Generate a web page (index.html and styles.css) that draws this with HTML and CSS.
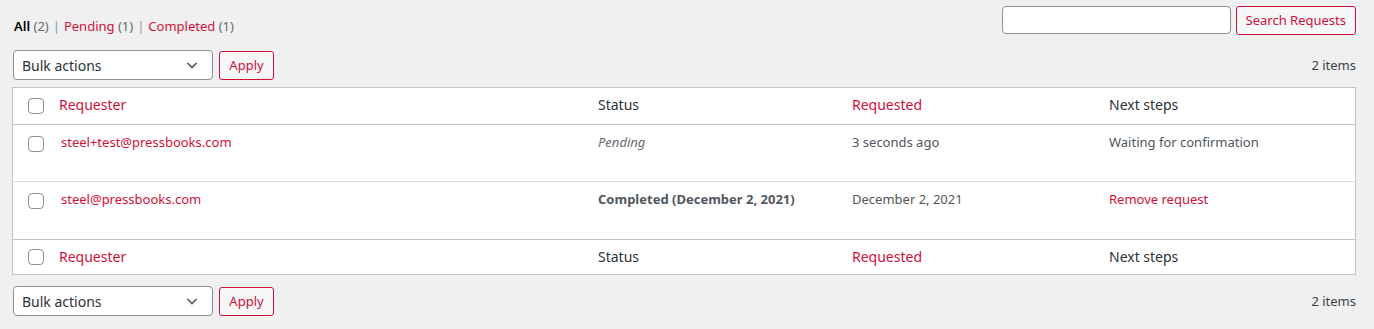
FILE: index.html
```html
<!DOCTYPE html>
<html lang="en">
  <head>
    <meta charset="UTF-8" />
    <title>Export Personal Data</title>
    <link rel="stylesheet" href="styles.css">
  </head>
  <body>
    <div class="wrap">
      <div class="top-row">
        <ul class="subsubsub">
          <li><span class="current">All</span> <span class="count">(2)</span></li>
          <li class="sep">|</li>
          <li><a href="#">Pending</a> <span class="count">(1)</span></li>
          <li class="sep">|</li>
          <li><a href="#">Completed</a> <span class="count">(1)</span></li>
        </ul>
        <div class="search-box">
          <input type="search" class="search-input" />
          <button class="button">Search Requests</button>
        </div>
      </div>

      <div class="tablenav">
        <div class="actions">
          <div class="select">
            <span>Bulk actions</span>
            <svg width="16" height="16" viewBox="0 0 16 16"><path d="M3.5 6 L8 10.5 L12.5 6" fill="none" stroke="#50575e" stroke-width="1.6"/></svg>
          </div>
          <button class="button apply">Apply</button>
        </div>
        <div class="num-items">2 items</div>
      </div>

      <table class="list-table">
        <thead>
          <tr>
            <th class="check-column"><span class="checkbox"></span></th>
            <th class="col-requester"><a href="#">Requester</a></th>
            <th class="col-status">Status</th>
            <th class="col-requested"><a href="#">Requested</a></th>
            <th class="col-next">Next steps</th>
          </tr>
        </thead>
        <tbody>
          <tr>
            <td class="check-column"><span class="checkbox"></span></td>
            <td class="email"><a href="#">steel+test@pressbooks.com</a></td>
            <td><em class="pending">Pending</em></td>
            <td>3 seconds ago</td>
            <td>Waiting for confirmation</td>
          </tr>
          <tr>
            <td class="check-column"><span class="checkbox"></span></td>
            <td class="email"><a href="#">steel@pressbooks.com</a></td>
            <td><strong>Completed (December 2, 2021)</strong></td>
            <td>December 2, 2021</td>
            <td><a href="#">Remove request</a></td>
          </tr>
        </tbody>
        <tfoot>
          <tr>
            <th class="check-column"><span class="checkbox"></span></th>
            <th><a href="#">Requester</a></th>
            <th>Status</th>
            <th><a href="#">Requested</a></th>
            <th>Next steps</th>
          </tr>
        </tfoot>
      </table>

      <div class="tablenav bottom">
        <div class="actions">
          <div class="select">
            <span>Bulk actions</span>
            <svg width="16" height="16" viewBox="0 0 16 16"><path d="M3.5 6 L8 10.5 L12.5 6" fill="none" stroke="#50575e" stroke-width="1.6"/></svg>
          </div>
          <button class="button apply">Apply</button>
        </div>
        <div class="num-items">2 items</div>
      </div>
    </div>
  </body>
</html>
```

FILE: styles.css
```css
body {
  margin: 0;
  background-color: #f0f0f1;
  font-family: "Noto Sans", sans-serif;
  font-size: 13px;
  color: #3c434a;
}

a {
  color: #d0103a;
  text-decoration: none;
}

.wrap {
  padding: 6px 18px 0 12px;
}

.top-row {
  display: flex;
  justify-content: space-between;
  align-items: center;
  height: 28px;
}

.subsubsub {
  list-style: none;
  margin: 11px 0 0 2px;
  padding: 0;
  display: flex;
  gap: 4px;
  font-size: 13px;
  color: #646970;
}

.subsubsub .current {
  color: #000;
  font-weight: 600;
}

.subsubsub .sep {
  color: #8c9ab0;
}

.search-box {
  display: flex;
  gap: 5px;
}

.search-input {
  width: 229px;
  height: 28px;
  box-sizing: border-box;
  border: 1px solid #8c8f94;
  border-radius: 4px;
  background: #fff;
}

.button {
  height: 29px;
  box-sizing: border-box;
  padding: 0 9px;
  border: 1px solid #d0103a;
  border-radius: 3px;
  background-color: #f6f7f7;
  color: #d0103a;
  font-family: inherit;
  font-size: 13px;
}

.button.apply {
  width: 55px;
  padding: 0;
}

.tablenav {
  display: flex;
  justify-content: space-between;
  align-items: center;
  height: 30px;
  margin: 16px 0 7px 1px;
}

.tablenav.bottom {
  margin-top: 11px;
}

.actions {
  display: flex;
  gap: 6px;
  align-items: center;
}

.select {
  width: 200px;
  height: 30px;
  box-sizing: border-box;
  display: flex;
  justify-content: space-between;
  align-items: center;
  padding: 0 12px 0 8px;
  border: 1px solid #8c8f94;
  border-radius: 4px;
  background-color: #fff;
  font-size: 14px;
  color: #2c3338;
}

.num-items {
  color: #3c434a;
  font-size: 13px;
}

.list-table {
  width: 100%;
  border-collapse: collapse;
  border: 1px solid #c3c4c7;
  background-color: #fff;
  table-layout: fixed;
}

.list-table th {
  text-align: left;
  font-weight: 400;
  font-size: 14px;
  color: #2c3338;
  height: 33px;
  padding: 0 10px 3px;
}

.list-table thead th {
  border-bottom: 1px solid #c3c4c7;
}

.list-table tfoot th {
  border-top: 1px solid #c3c4c7;
  height: 33px;
  padding-bottom: 1px;
}

.list-table td {
  vertical-align: top;
  padding: 8px 10px 0;
  height: 45px;
  color: #50575e;
  line-height: 19px;
}

.list-table tbody tr + tr td {
  border-top: 1px solid #dcdcde;
  height: 46px;
}

.list-table .check-column {
  width: 16px;
  padding: 0 5px 0 15px;
  vertical-align: middle;
}

.list-table td.check-column {
  vertical-align: top;
  padding-top: 11px;
}

.list-table .col-requester {
  width: 519px;
}

.list-table .col-status {
  width: 234px;
}

.list-table .col-requested {
  width: 237px;
}

.list-table td.email {
  padding-left: 12px;
}

.checkbox {
  display: block;
  width: 16px;
  height: 16px;
  box-sizing: border-box;
  border: 1px solid #8c8f94;
  border-radius: 4px;
  background: #fff;
}

.pending {
  color: #646970;
}

strong {
  font-weight: 700;
  color: #50575e;
}
```
